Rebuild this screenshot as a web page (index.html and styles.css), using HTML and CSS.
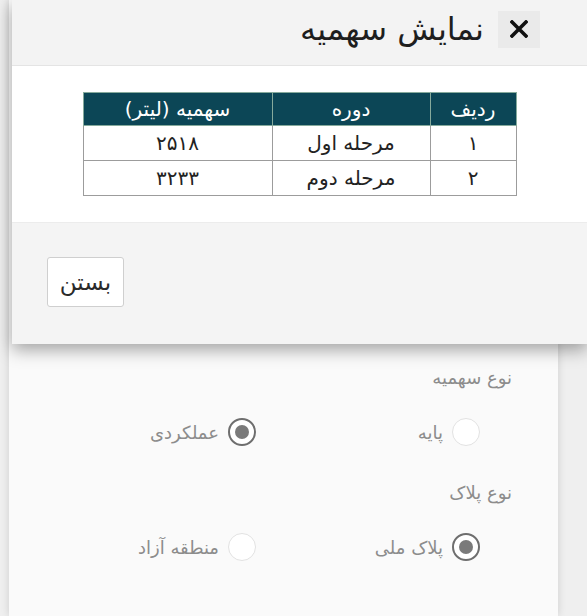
FILE: index.html
```html
<!DOCTYPE html>
<html lang="fa" dir="rtl">
<head>
<meta charset="utf-8">
<title>نمایش سهمیه</title>
<link rel="stylesheet" href="styles.css">
</head>
<body>
<div class="page">
  <div class="card">
    <div class="field-label">نوع سهمیه</div>
    <div class="radio-row">
      <label class="radio"><span class="circle"></span><span>پایه</span></label>
      <label class="radio"><span class="circle checked"></span><span>عملکردی</span></label>
    </div>
    <div class="field-label second">نوع پلاک</div>
    <div class="radio-row">
      <label class="radio"><span class="circle checked"></span><span>پلاک ملی</span></label>
      <label class="radio"><span class="circle"></span><span>منطقه آزاد</span></label>
    </div>
  </div>
</div>

<div class="modal">
  <div class="modal-header">
    <button class="close" type="button" aria-label="close">
      <svg width="18" height="18" viewBox="0 0 18 18"><path d="M2 2 L16 16 M16 2 L2 16" stroke="#111" stroke-width="3.6" stroke-linecap="square" fill="none"/></svg>
    </button>
    <h4 class="modal-title">نمایش سهمیه</h4>
  </div>
  <div class="modal-body">
    <table class="quota">
      <thead>
        <tr><th class="c1">ردیف</th><th class="c2">دوره</th><th class="c3">سهمیه (لیتر)</th></tr>
      </thead>
      <tbody>
        <tr><td>۱</td><td>مرحله اول</td><td>۲۵۱۸</td></tr>
        <tr><td>۲</td><td>مرحله دوم</td><td>۳۲۳۳</td></tr>
      </tbody>
    </table>
  </div>
  <div class="modal-footer">
    <button class="btn" type="button">بستن</button>
  </div>
</div>
</body>
</html>
```

FILE: styles.css
```css
html, body {
  margin: 0;
  padding: 0;
}
body {
  width: 587px;
  height: 616px;
  overflow: hidden;
  position: relative;
  background: #efefef;
  font-family: "DejaVu Sans", "Noto Sans", sans-serif;
}
.page {
  height: 616px;
}
.card {
  margin: 0 29px 0 9px;
  width: 549px;
  height: 616px;
  box-sizing: border-box;
  background: #fafafa;
  box-shadow: 0 0 8px rgba(0, 0, 0, 0.14);
  padding: 363px 46px 0 0;
  color: #8c8c8c;
  font-size: 18px;
}
.field-label {
  line-height: 30px;
  height: 30px;
}
.field-label.second {
  margin-top: 26px;
}
.radio-row {
  margin-top: 19px;
  margin-right: 32px;
  display: grid;
  grid-template-columns: 224px 224px;
  height: 40px;
  align-items: center;
}
.radio {
  display: flex;
  align-items: center;
  gap: 9px;
}
.circle {
  width: 28px;
  height: 28px;
  box-sizing: border-box;
  border-radius: 50%;
  border: 1.5px solid #e2e2e2;
  background: #fff;
  display: flex;
  align-items: center;
  justify-content: center;
}
.circle.checked {
  border: 2px solid #6e6e6e;
}
.circle.checked::after {
  content: "";
  width: 14px;
  height: 14px;
  border-radius: 50%;
  background: #7a7a7a;
}

.modal {
  position: absolute;
  top: 0;
  left: 12px;
  width: 575px;
  background: #fff;
  box-shadow: 0 6px 16px rgba(0, 0, 0, 0.35);
}
.modal-header {
  height: 66px;
  box-sizing: border-box;
  background: #f3f3f3;
  border-bottom: 1px solid #e4e4e4;
  display: flex;
  align-items: center;
  padding: 0 47px 7px;
  gap: 14px;
}
.close {
  width: 42px;
  height: 37px;
  border: 0;
  background: #eaeaea;
  padding: 0;
  display: flex;
  align-items: center;
  justify-content: center;
}
.modal-title {
  margin: 0;
  font-weight: normal;
  font-size: 32px;
  line-height: 40px;
  color: #1e1e1e;
}
.modal-body {
  padding: 26px 0 26px;
  background: #fff;
}
.quota {
  width: 430px;
  margin: 0 auto;
  border-collapse: collapse;
  table-layout: fixed;
  font-size: 20px;
  color: #222;
}
.quota th {
  background: #0c4656;
  color: #fff;
  font-weight: normal;
  height: 32px;
  border: 1.5px solid #86aa9c;
  padding: 0;
  line-height: 28px;
}
.quota td {
  height: 34px;
  border: 1px solid #9c9c9c;
  text-align: center;
  padding: 0;
  line-height: 28px;
}
.c1 { width: 85px; }
.c2 { width: 157px; }
.c3 { width: 188px; }
.modal-footer {
  background: #f4f4f4;
  border-top: 1px solid #ececec;
  padding: 34px 35px 37px;
  display: flex;
  justify-content: flex-end;
}
.btn {
  width: 77px;
  height: 50px;
  background: #fff;
  border: 1px solid #cfcfcf;
  border-radius: 3px;
  font-family: "DejaVu Sans", "Noto Sans", sans-serif;
  font-size: 23px;
  color: #2a2a2a;
  padding: 0;
}
```
